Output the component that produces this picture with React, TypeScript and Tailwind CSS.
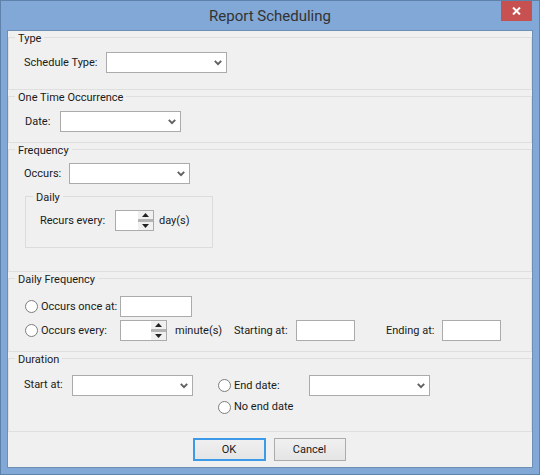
import React from "react";

const font = { fontFamily: 'Roboto, "Noto Sans", sans-serif' };

function Select({ className = "" }: { className?: string }) {
  return (
    <div className={`flex h-[21px] w-[121px] shrink-0 items-center justify-end border border-[#ababab] bg-white pr-[4px] ${className}`}>
      <svg width="8" height="6" viewBox="0 0 8 6">
        <path d="M0.8 0.8 L4 4.2 L7.2 0.8" fill="none" stroke="#606060" strokeWidth="1.9" />
      </svg>
    </div>
  );
}

function Input({ className = "" }: { className?: string }) {
  return <div className={`h-[21px] shrink-0 border border-[#ababab] bg-white ${className}`} />;
}

function Spinner({ className = "" }: { className?: string }) {
  return (
    <div className={`flex h-[21px] shrink-0 justify-end border border-[#ababab] bg-white ${className}`}>
      <div className="flex w-[15px] flex-col bg-[#f0f0f0]">
        <div className="flex h-[8px] items-center justify-center">
          <svg width="7" height="4" viewBox="0 0 7 4"><path d="M3.5 0 L7 4 L0 4 Z" fill="#222" /></svg>
        </div>
        <div className="h-[3px] bg-[#b4b4b4]" />
        <div className="flex h-[8px] items-center justify-center">
          <svg width="7" height="4" viewBox="0 0 7 4"><path d="M0 0 L7 0 L3.5 4 Z" fill="#222" /></svg>
        </div>
      </div>
    </div>
  );
}

function Radio() {
  return <div className="h-[13px] w-[13px] shrink-0 rounded-full border border-[#7d7d7d] bg-white" />;
}

function Group({ title, className, children }: { title: string; className: string; children: React.ReactNode }) {
  return (
    <fieldset className={`min-w-0 border border-[#dfdfdf] pl-[15px] ${className}`}>
      <legend className="-ml-[9px] h-[12px] whitespace-nowrap px-[3px] leading-[16px]">{title}</legend>
      {children}
    </fieldset>
  );
}

export default function App() {
  return (
    <div style={font} className="flex h-[475px] w-[540px] flex-col whitespace-nowrap border border-[#5f82aa] bg-[#81a8d7] text-[11px] leading-[16px] text-[#1a1a1a]">
      <div className="relative flex h-[29px] shrink-0 items-center justify-center text-[15px] text-[#333]">
        Report Scheduling
        <div className="absolute right-[7px] top-0 flex h-[20px] w-[31px] items-center justify-center bg-[#c75050]">
          <svg width="9" height="8" viewBox="0 0 9 8">
            <path d="M1 0.5 L8 7.5 M8 0.5 L1 7.5" stroke="#fff" strokeWidth="2" />
          </svg>
        </div>
      </div>

      <div className="ml-[6px] mr-[6px] flex h-[438px] w-[526px] flex-col border border-[#6d8fb6] bg-[#f0f0f0]">
        <Group title="Type" className="h-[59px]">
          <div className="mt-[9px] flex items-center">
            <span className="w-[82px]">Schedule Type:</span>
            <Select />
          </div>
        </Group>

        <Group title="One Time Occurrence" className="h-[53px]">
          <div className="mt-[9px] flex items-center">
            <span className="w-[36px] pl-[1px]">Date:</span>
            <Select />
          </div>
        </Group>

        <Group title="Frequency" className="h-[129px]">
          <div className="mt-[8px] flex items-center">
            <span className="w-[45px]">Occurs:</span>
            <Select />
          </div>
          <fieldset className="ml-[1px] mt-[6px] h-[58px] w-[188px] border border-[#dcdcdc] pl-[14px]">
            <legend className="-ml-[7px] h-[12px] px-[3px] leading-[16px]">Daily</legend>
            <div className="mt-[8px] flex items-center">
              <span className="w-[75px]">Recurs every:</span>
              <Spinner className="w-[39px]" />
              <span className="ml-[5px]">day(s)</span>
            </div>
          </fieldset>
        </Group>

        <Group title="Daily Frequency" className="h-[80px]">
          <div className="ml-[1px] mt-[12px] flex items-center">
            <Radio />
            <span className="ml-[3px] w-[79px]">Occurs once at:</span>
            <Input className="w-[72px]" />
          </div>
          <div className="ml-[1px] mt-[3px] flex items-center">
            <Radio />
            <span className="ml-[3px] w-[79px]">Occurs every:</span>
            <Spinner className="w-[47px]" />
            <span className="ml-[8px] w-[59px]">minute(s)</span>
            <span className="w-[62px]">Starting at:</span>
            <Input className="w-[59px]" />
            <span className="ml-[31px] w-[56px]">Ending at:</span>
            <Input className="w-[59px]" />
          </div>
        </Group>

        <Group title="Duration" className="h-[80px]">
          <div className="mt-[11px] flex items-start">
            <span className="w-[48px] pt-[2px]">Start at:</span>
            <Select />
            <div className="ml-[25px] flex flex-col gap-[3px]">
              <div className="flex h-[21px] items-center">
                <Radio />
                <span className="ml-[3px] w-[75px]">End date:</span>
                <Select />
              </div>
              <div className="flex items-center">
                <Radio />
                <span className="ml-[3px]">No end date</span>
              </div>
            </div>
          </div>
        </Group>

        <div className="flex flex-1 justify-center gap-[8px] pr-[2px] pt-[6px]">
          <button className="h-[23px] w-[73px] border-2 border-[#3c9ae8] bg-gradient-to-b from-[#f0f0f0] to-[#e5e5e5] leading-[19px]">OK</button>
          <button className="h-[23px] w-[72px] border border-[#acacac] bg-gradient-to-b from-[#f0f0f0] to-[#e5e5e5]">Cancel</button>
        </div>
      </div>
    </div>
  );
}
